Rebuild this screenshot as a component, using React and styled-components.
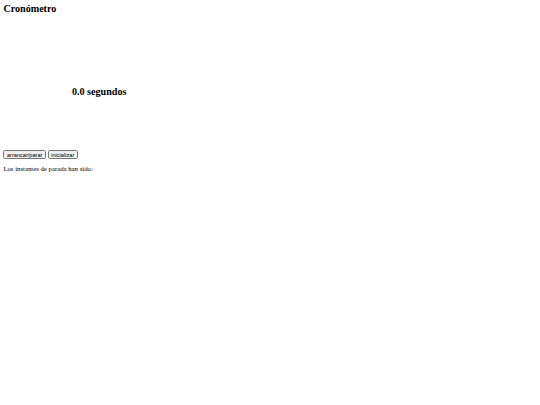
import React from "react";
import styled, { createGlobalStyle } from "styled-components";

const Global = createGlobalStyle`
  html, body { margin: 0; padding: 0; background: #fff; }
  body { font-family: "Liberation Serif", "Times New Roman", serif; color: #000; }
`;

const Page = styled.div`
  zoom: 0.421875;
  padding: 8px;
  font-family: "Liberation Serif", "Times New Roman", serif;
  font-size: 16px;
`;

const Title = styled.h2`
  margin: 0;
  font-size: 24px;
  font-weight: bold;
`;

const Display = styled.div`
  width: 454px;
  padding: 169px 0 127px;
  text-align: center;
`;

const Reading = styled.h2`
  margin: 0;
  font-size: 24px;
  font-weight: bold;
`;

const Controls = styled.div`
  display: block;
`;

const Button = styled.button`
  font-family: "Liberation Sans", Arial, sans-serif;
  font-size: 13.333px;
`;

const Note = styled.p`
  margin: 14px 0 0;
`;

export default function App() {
  return (
    <>
      <Global />
      <Page>
        <Title>Cronómetro</Title>
        <Display>
          <Reading>0.0 segundos</Reading>
        </Display>
        <Controls>
          <Button>arrancar/parar</Button>{" "}
          <Button>inicializar</Button>
        </Controls>
        <Note>Los instantes de parada han sido:</Note>
      </Page>
    </>
  );
}
